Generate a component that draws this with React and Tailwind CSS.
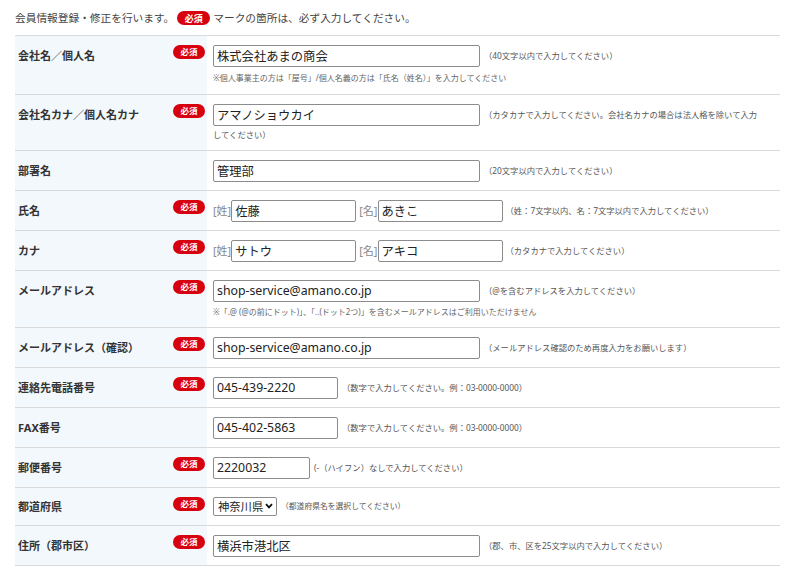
import React from "react";

function Badge({ big }) {
  return (
    <span
      className={
        "inline-flex items-center justify-center rounded-full bg-[#d7000f] font-bold leading-none text-white " +
        (big ? "h-[14px] w-[33px] text-[9px]" : "h-[14px] w-[32px] text-[8.5px]")
      }
    >
      必須
    </span>
  );
}

function Field({ value, w = "w-[267px]" }) {
  return (
    <input
      readOnly
      defaultValue={value}
      className={
        "inline-block h-[22px] rounded-[2px] border border-[#8c8c8c] bg-white px-[3px] align-middle text-[12.3px] leading-[20px] text-[#222] outline-none " +
        w
      }
    />
  );
}

function Note({ children }) {
  return <span className="ml-[4px] align-middle">{children}</span>;
}

function Sub({ children, loose }) {
  return (
    <div className={"text-[8px] leading-[16px] text-[#666] " + (loose ? "mt-[3px]" : "mt-[2px]")}>
      {children}
    </div>
  );
}

function Row({ label, required, compact, tight, children }) {
  return (
    <div className="flex border-b border-[#dadada]">
      <div className="flex w-[192px] shrink-0 items-start justify-between bg-[#f3f8fc] pb-[8px] pl-[3px] pr-[2px] pt-[9px]">
        <span
          className={
            "text-[11px] font-bold text-[#333] " + (compact ? "leading-[20px]" : "leading-[22px]")
          }
        >
          {label}
        </span>
        {required && <Badge />}
      </div>
      <div
        className={
          "min-w-0 flex-1 pl-[6px] pr-[22px] pt-[9px] text-[8.3px] leading-[16px] text-[#555] " +
          (tight ? "pb-[7px]" : "pb-[8px]")
        }
      >
        {children}
      </div>
    </div>
  );
}

function NameInputs({ sei, mei, note }) {
  return (
    <>
      <span className="align-middle text-[11px] text-[#888]">[姓]</span>
      <Field value={sei} w="w-[125px]" />
      <span className="ml-[3px] align-middle text-[11px] text-[#888]">[名]</span>
      <Field value={mei} w="w-[125px]" />
      <span className="ml-[3px] align-middle">{note}</span>
    </>
  );
}

export default function App() {
  return (
    <div className="min-h-screen bg-white px-[15px] pt-[10px] font-['Noto_Sans','Noto_Sans_CJK_JP',sans-serif]">
      <p className="mb-[9px] flex items-center gap-[3px] text-[10.7px] leading-[16px] text-[#444]">
        <span>会員情報登録・修正を行います。</span>
        <Badge big />
        <span>マークの箇所は、必ず入力してください。</span>
      </p>

      <div className="w-[765px] border-t border-[#dadada]">
        <Row label="会社名／個人名" required>
          <Field value="株式会社あまの商会" />
          <Note>（40文字以内で入力してください）</Note>
          <Sub loose>※個人事業主の方は「屋号」/個人名義の方は「氏名（姓名）」を入力してください</Sub>
        </Row>

        <Row label="会社名カナ／個人名カナ" required tight>
          <Field value="アマノショウカイ" />
          <Note>（カタカナで入力してください。会社名カナの場合は法人格を除いて入力してください）</Note>
        </Row>

        <Row label="部署名">
          <Field value="管理部" />
          <Note>（20文字以内で入力してください）</Note>
        </Row>

        <Row label="氏名" required>
          <NameInputs sei="佐藤" mei="あきこ" note="（姓：7文字以内、名：7文字以内で入力してください）" />
        </Row>

        <Row label="カナ" required>
          <NameInputs sei="サトウ" mei="アキコ" note="（カタカナで入力してください）" />
        </Row>

        <Row label="メールアドレス" required tight>
          <Field value="shop-service@amano.co.jp" />
          <Note>（@を含むアドレスを入力してください）</Note>
          <Sub>※「.@ (@の前にドット)」、「..(ドット2つ)」を含むメールアドレスはご利用いただけません</Sub>
        </Row>

        <Row label="メールアドレス（確認）" required>
          <Field value="shop-service@amano.co.jp" />
          <Note>（メールアドレス確認のため再度入力をお願いします）</Note>
        </Row>

        <Row label="連絡先電話番号" required>
          <Field value="045-439-2220" w="w-[125px]" />
          <Note>（数字で入力してください。例：03-0000-0000）</Note>
        </Row>

        <Row label="FAX番号">
          <Field value="045-402-5863" w="w-[125px]" />
          <Note>（数字で入力してください。例：03-0000-0000）</Note>
        </Row>

        <Row label="郵便番号" required>
          <Field value="2220032" w="w-[97px]" />
          <Note>(-（ハイフン）なしで入力してください）</Note>
        </Row>

        <Row label="都道府県" required compact>
          <span className="relative inline-block align-middle">
            <select
              defaultValue="神奈川県"
              className="h-[19px] w-[64px] appearance-none rounded-[2px] border border-[#8c8c8c] bg-white pl-[4px] text-[11.3px] leading-[17px] text-[#222] outline-none"
            >
              <option>東京都</option>
              <option>神奈川県</option>
              <option>千葉県</option>
              <option>埼玉県</option>
            </select>
            <svg
              viewBox="0 0 8 6"
              className="pointer-events-none absolute right-[4px] top-[6px] h-[6px] w-[8px]"
            >
              <path d="M1 1.2 L4 4.4 L7 1.2" fill="none" stroke="#111" strokeWidth="1.8" />
            </svg>
          </span>
          <span className="ml-[4px] align-middle text-[7.8px]">（都道府県名を選択してください）</span>
        </Row>

        <Row label="住所（郡市区）" required>
          <Field value="横浜市港北区" />
          <Note>（郡、市、区を25文字以内で入力してください）</Note>
        </Row>
      </div>
    </div>
  );
}
